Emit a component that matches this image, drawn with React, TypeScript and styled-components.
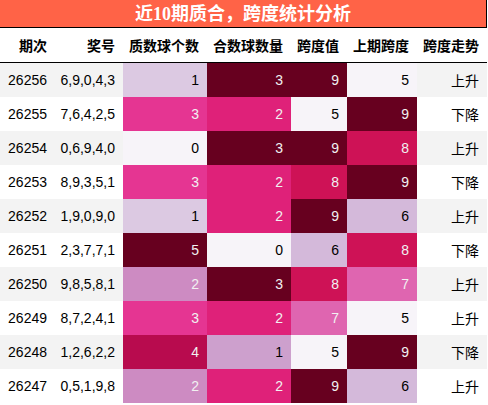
import React from "react";
import styled, { createGlobalStyle } from "styled-components";

const GlobalStyle = createGlobalStyle`
  html, body { margin: 0; padding: 0; background: #ffffff; }
  body { font-family: "Liberation Sans", "Noto Sans CJK SC", sans-serif; }
`;

type Row = {
  id: string;
  nums: string;
  prime: number;
  comp: number;
  span: number;
  prev: number;
  trend: string;
};

const rows: Row[] = [
  { id: "26256", nums: "6,9,0,4,3", prime: 1, comp: 3, span: 9, prev: 5, trend: "上升" },
  { id: "26255", nums: "7,6,4,2,5", prime: 3, comp: 2, span: 5, prev: 9, trend: "下降" },
  { id: "26254", nums: "0,6,9,4,0", prime: 0, comp: 3, span: 9, prev: 8, trend: "上升" },
  { id: "26253", nums: "8,9,3,5,1", prime: 3, comp: 2, span: 8, prev: 9, trend: "下降" },
  { id: "26252", nums: "1,9,0,9,0", prime: 1, comp: 2, span: 9, prev: 6, trend: "上升" },
  { id: "26251", nums: "2,3,7,7,1", prime: 5, comp: 0, span: 6, prev: 8, trend: "下降" },
  { id: "26250", nums: "9,8,5,8,1", prime: 2, comp: 3, span: 8, prev: 7, trend: "上升" },
  { id: "26249", nums: "8,7,2,4,1", prime: 3, comp: 2, span: 7, prev: 5, trend: "上升" },
  { id: "26248", nums: "1,2,6,2,2", prime: 4, comp: 1, span: 5, prev: 9, trend: "下降" },
  { id: "26247", nums: "0,5,1,9,8", prime: 2, comp: 2, span: 9, prev: 6, trend: "上升" },
];

const PURD: [number, number, number][] = [
  [0.96862745, 0.95686275, 0.97647059],
  [0.90588235, 0.88235294, 0.9372549],
  [0.83137255, 0.7254902, 0.85490196],
  [0.78823529, 0.58039216, 0.78039216],
  [0.8745098, 0.39607843, 0.69019608],
  [0.90588235, 0.16078431, 0.54117647],
  [0.80784314, 0.07058824, 0.3372549],
  [0.59607843, 0.0, 0.2627451],
  [0.40392157, 0.0, 0.12156863],
];

function purd(x: number): [number, number, number] {
  const n = PURD.length - 1;
  const p = Math.max(0, Math.min(1, x)) * n;
  const i = Math.min(n - 1, Math.floor(p));
  const t = p - i;
  const a = PURD[i];
  const b = PURD[i + 1];
  return [a[0] + (b[0] - a[0]) * t, a[1] + (b[1] - a[1]) * t, a[2] + (b[2] - a[2]) * t];
}

function lum(c: [number, number, number]) {
  const f = (v: number) => (v <= 0.04045 ? v / 12.92 : Math.pow((v + 0.055) / 1.055, 2.4));
  return 0.2126 * f(c[0]) + 0.7152 * f(c[1]) + 0.0722 * f(c[2]);
}

function gradient(v: number, min: number, max: number) {
  const c = purd((v - min) / (max - min));
  const hex = "#" + c.map((x) => Math.round(x * 255).toString(16).padStart(2, "0")).join("");
  return { bg: hex, fg: lum(c) < 0.408 ? "#f1f1f1" : "#000000" };
}

const range = (key: keyof Row) => {
  const vals = rows.map((r) => r[key] as number);
  return [Math.min(...vals), Math.max(...vals)] as [number, number];
};

const Wrapper = styled.div`
  width: 488px;
  display: flex;
  flex-direction: column;
`;

const Title = styled.div`
  width: 486px;
  height: 27px;
  background: #ff6347;
  border-right: 1px solid #000;
  border-bottom: 1px solid #000;
  color: #ffffff;
  font-family: "Liberation Serif", "Noto Sans CJK SC", serif;
  font-weight: bold;
  font-size: 18px;
  display: flex;
  align-items: center;
  justify-content: center;
  line-height: 1;
`;

const Grid = styled.div`
  display: grid;
  grid-template-columns: 55px 68px 84px 84px 56px 70px 70px;
  width: 487px;
`;

const HeadCell = styled.div`
  height: 34px;
  border-bottom: 1px solid #000;
  display: flex;
  align-items: center;
  justify-content: flex-end;
  padding-right: 8px;
  font-size: 14px;
  font-weight: bold;
  color: #000;
  white-space: nowrap;
`;

const Cell = styled.div<{ $bg: string; $fg?: string }>`
  height: 34px;
  display: flex;
  align-items: center;
  justify-content: flex-end;
  padding-right: 8px;
  font-size: 14px;
  color: ${(p) => p.$fg ?? "#000"};
  background: ${(p) => p.$bg};
  white-space: nowrap;
`;

const headers = ["期次", "奖号", "质数球个数", "合数球数量", "跨度值", "上期跨度", "跨度走势"];
const gradCols: (keyof Row)[] = ["prime", "comp", "span", "prev"];

export default function App() {
  const ranges = Object.fromEntries(gradCols.map((k) => [k, range(k)])) as Record<string, [number, number]>;
  return (
    <>
      <GlobalStyle />
      <Wrapper>
        <Title>近10期质合，跨度统计分析</Title>
        <Grid>
          {headers.map((h) => (
            <HeadCell key={h}>{h}</HeadCell>
          ))}
          {rows.map((r, i) => {
            const stripe = i % 2 === 0 ? "#f3f3f3" : "#ffffff";
            return (
              <React.Fragment key={r.id}>
                <Cell $bg={stripe}>{r.id}</Cell>
                <Cell $bg={stripe}>{r.nums}</Cell>
                {gradCols.map((k) => {
                  const [mn, mx] = ranges[k];
                  const g = gradient(r[k] as number, mn, mx);
                  return (
                    <Cell key={k} $bg={g.bg} $fg={g.fg}>
                      {r[k]}
                    </Cell>
                  );
                })}
                <Cell $bg={stripe}>{r.trend}</Cell>
              </React.Fragment>
            );
          })}
        </Grid>
      </Wrapper>
    </>
  );
}
